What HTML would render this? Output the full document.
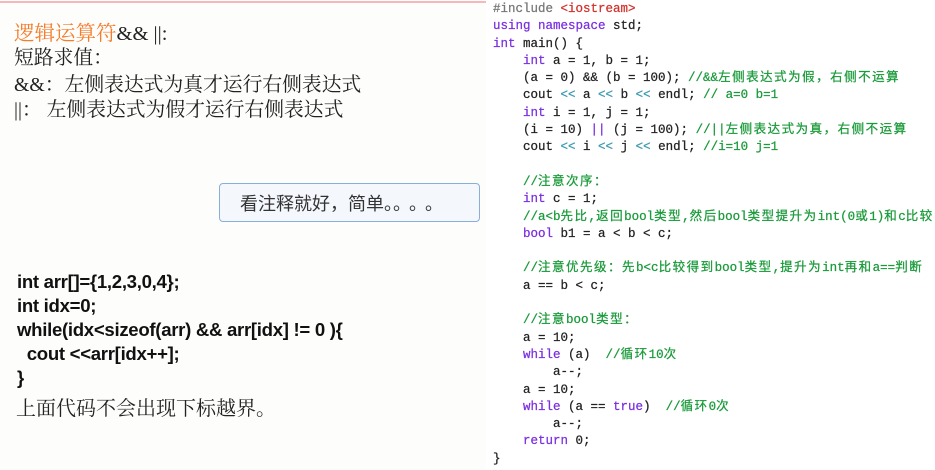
<!DOCTYPE html>
<html><head><meta charset="utf-8"><style>
body{margin:0;width:935px;height:470px;background:#fdfdfb;position:relative;overflow:hidden;font-family:"Liberation Sans","Noto Sans CJK SC",sans-serif;}
.topline{position:absolute;left:0;top:1px;width:487px;height:2px;background:#f4b8bd;}
.code{position:absolute;left:486px;top:0;width:449px;height:470px;background:#fff;}
.code pre{margin:0;position:absolute;left:7px;top:1px;font-family:"Liberation Mono","Noto Sans CJK SC",monospace;font-size:12.5px;line-height:17.3px;color:#222;-webkit-text-stroke:0.25px;}
.z{letter-spacing:1.5px}
.k{color:#7b2fe0}.c{color:#1a9a3a}.s{color:#d2302a}.p{color:#777}.o{color:#3a9ab0}
.l{position:absolute;left:14px;font-size:19.8px;color:#222;white-space:nowrap;font-family:"Liberation Serif","Noto Serif CJK SC",serif;}
.b{position:absolute;left:17px;font-size:18.6px;font-weight:bold;color:#111;white-space:nowrap;letter-spacing:-0.3px}
.box{position:absolute;left:219px;top:183px;width:261px;height:39px;border:1.5px solid #8aaedb;border-radius:4px;background:#f4f8fd;box-sizing:border-box;font-size:18px;color:#333;padding:6px 0 0 20px;font-family:"Liberation Sans","Noto Sans CJK SC",sans-serif;white-space:nowrap}
</style></head><body>
<div class="topline"></div>
<div class="l" style="top:16px;font-size:20.5px"><span style="color:#f57c2a">逻辑运算符</span>&amp;&amp; ||:</div>
<div class="l" style="top:41px">短路求值：</div>
<div class="l" style="top:68px">&amp;&amp;：左侧表达式为真才运行右侧表达式</div>
<div class="l" style="top:93px">||：&nbsp;左侧表达式为假才运行右侧表达式</div>
<div class="box">看注释就好，简单。<span style="letter-spacing:7px">。。。</span></div>
<div class="b" style="top:271px">int arr[]={1,2,3,0,4};</div>
<div class="b" style="top:295px">int idx=0;</div>
<div class="b" style="top:319px">while(idx&lt;sizeof(arr) &amp;&amp; arr[idx] != 0 ){</div>
<div class="b" style="top:343px">&nbsp;&nbsp;cout &lt;&lt;arr[idx++];</div>
<div class="b" style="top:367px">}</div>
<div class="l" style="top:392px;left:16px;font-size:20px">上面代码不会出现下标越界。</div>
<div class="code"><pre><span class="p">#include</span> <span class="s">&lt;iostream&gt;</span>
<span class="k">using namespace</span> std;
<span class="k">int</span> main() {
    <span class="k">int</span> a = 1, b = 1;
    (a = 0) &amp;&amp; (b = 100); <span class="c">//&amp;&amp;<span class="z">左侧表达式为假，右侧不运算</span></span>
    cout <span class="o">&lt;&lt;</span> a <span class="o">&lt;&lt;</span> b <span class="o">&lt;&lt;</span> endl; <span class="c">// a=0 b=1</span>
    <span class="k">int</span> i = 1, j = 1;
    (i = 10) <span class="k">||</span> (j = 100); <span class="c">//||<span class="z">左侧表达式为真，右侧不运算</span></span>
    cout <span class="o">&lt;&lt;</span> i <span class="o">&lt;&lt;</span> j <span class="o">&lt;&lt;</span> endl; <span class="c">//i=10 j=1</span>

    <span class="c">//<span class="z">注意次序：</span></span>
    <span class="k">int</span> c = 1;
    <span class="c">//a&lt;b<span class="z">先比</span>,<span class="z">返回</span>bool<span class="z">类型</span>,<span class="z">然后</span>bool<span class="z">类型提升为</span>int(0<span class="z">或</span>1)<span class="z">和</span>c<span class="z">比较</span></span>
    <span class="k">bool</span> b1 = a &lt; b &lt; c;

    <span class="c">//<span class="z">注意优先级：先</span>b&lt;c<span class="z">比较得到</span>bool<span class="z">类型</span>,<span class="z">提升为</span>int<span class="z">再和</span>a==<span class="z">判断</span></span>
    a == b &lt; c;

    <span class="c">//<span class="z">注意</span>bool<span class="z">类型：</span></span>
    a = 10;
    <span class="k">while</span> (a)  <span class="c">//<span class="z">循环</span>10<span class="z">次</span></span>
        a--;
    a = 10;
    <span class="k">while</span> (a == <span class="k">true</span>)  <span class="c">//<span class="z">循环</span>0<span class="z">次</span></span>
        a--;
    <span class="k">return</span> 0;
}</pre></div>
</body></html>
